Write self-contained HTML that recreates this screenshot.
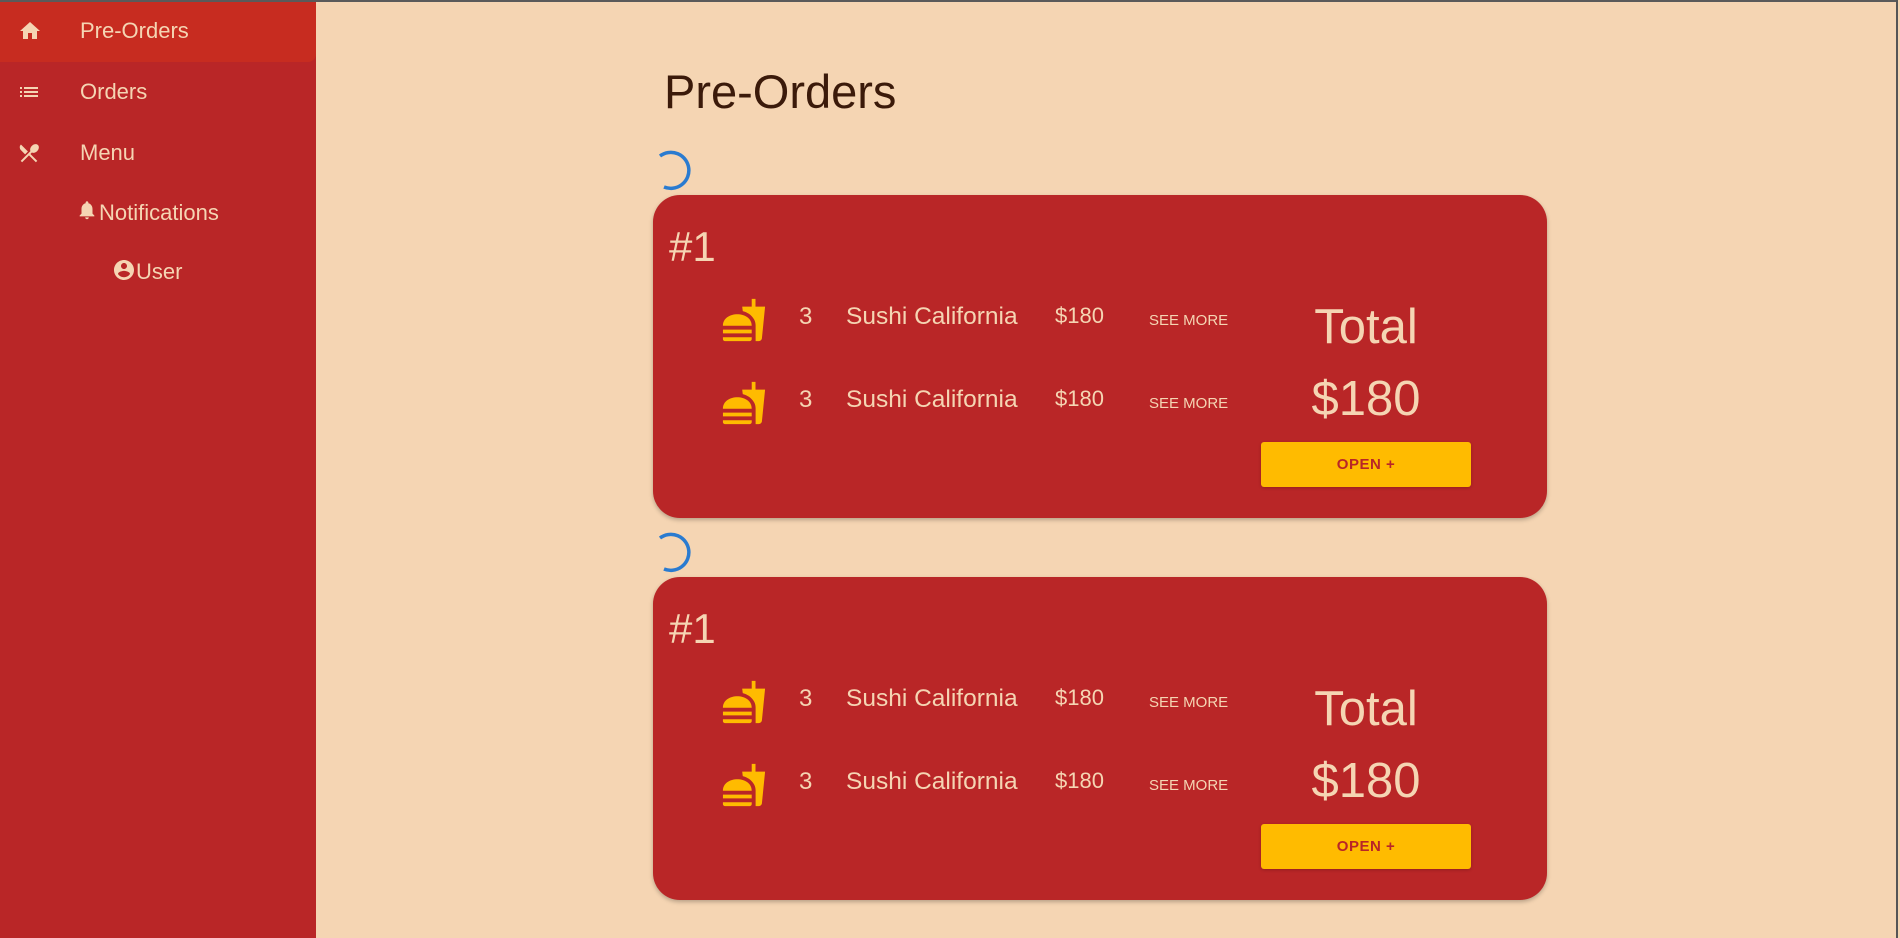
<!DOCTYPE html>
<html><head><meta charset="utf-8"><style>
*{margin:0;padding:0;box-sizing:border-box}
body{width:1900px;height:938px;overflow:hidden;background:#f5d5b3;font-family:"Liberation Sans",sans-serif;position:relative}
.top{position:absolute;left:0;top:0;width:1900px;height:2px;background:#5a5a5a}
.side{position:absolute;left:0;top:2px;width:316px;height:936px;background:#b92627}
.active{position:absolute;left:0;top:0;width:316px;height:60px;background:#c72c20;border-bottom-right-radius:8px}
.nav{position:absolute;color:#f5d5b3;font-size:22px;line-height:26px}
h1{position:absolute;left:664px;top:64px;font-size:47px;font-weight:normal;color:#3b1a0a}
.spin{position:absolute;width:42px;height:42px}
.card{position:absolute;left:653px;width:894px;height:323px;background:#b92627;border-radius:27px;box-shadow:0 2px 4px rgba(0,0,0,.25);color:#f5d5b3}
.num{position:absolute;left:16px;top:28px;font-size:42px}
.row{position:absolute;left:0;width:100%;height:50px}
.row svg{position:absolute;left:68px;top:0}
.q{position:absolute;left:146px;top:6px;font-size:24px}
.n{position:absolute;left:193px;top:6px;font-size:24.5px}
.p{position:absolute;left:402px;top:6px;font-size:22px}
.s{position:absolute;left:496px;top:15px;font-size:15px}
.tot{position:absolute;left:613px;width:200px;text-align:center;font-size:49px}
.btn{position:absolute;left:608px;top:247px;width:210px;height:45px;background:#ffbb00;border-radius:3px;color:#b92627;font-weight:bold;font-size:15px;text-align:center;line-height:45px;box-shadow:0 1px 3px rgba(0,0,0,.2);letter-spacing:.5px}
</style></head><body>
<div class="top"></div>
<div style="position:absolute;right:0;top:0;width:4px;height:938px;background:#f5d5b3;border-left:2px solid #555"></div>
<div class="side">
<div class="active"></div>
<div class="nav" style="left:80px;top:16px">Pre-Orders</div>
<svg style="position:absolute;left:18px;top:17px" width="24" height="24" viewBox="0 0 24 24"><path fill="#f5d5b3" d="M10 20v-6h4v6h5v-8h3L12 3 2 12h3v8z"/></svg>
<div class="nav" style="left:80px;top:77px">Orders</div>
<svg style="position:absolute;left:17px;top:78px" width="24" height="24" viewBox="0 0 24 24"><path fill="#f5d5b3" d="M3 13h2v-2H3v2zm0 4h2v-2H3v2zm0-8h2V7H3v2zm4 4h14v-2H7v2zm0 4h14v-2H7v2zM7 7v2h14V7H7z"/></svg>
<div class="nav" style="left:80px;top:138px">Menu</div>
<svg style="position:absolute;left:17px;top:139px" width="24" height="24" viewBox="0 0 24 24"><path fill="#f5d5b3" d="M8.1 13.34l2.83-2.83L3.91 3.5a4.008 4.008 0 000 5.66l4.19 4.18zm6.78-1.81c1.53.71 3.680.21 5.27-1.38 1.91-1.91 2.28-4.65.81-6.12-1.46-1.46-4.2-1.1-6.12.81-1.59 1.59-2.09 3.740-1.38 5.27L3.7 19.87l1.41 1.41L12 14.41l6.88 6.88 1.41-1.41L13.41 13l1.47-1.47z"/></svg>
<div class="nav" style="left:99px;top:198px">Notifications</div>
<svg style="position:absolute;left:76px;top:197px" width="22" height="22" viewBox="0 0 24 24"><path fill="#f5d5b3" d="M12 22c1.1 0 2-.9 2-2h-4c0 1.1.89 2 2 2zm6-6v-5c0-3.07-1.64-5.64-4.5-6.32V4c0-.83-.67-1.5-1.5-1.5s-1.5.67-1.5 1.5v.68C7.63 5.36 6 7.92 6 11v5l-2 2v1h16v-1l-2-2z"/></svg>
<div class="nav" style="left:136px;top:257px">User</div>
<svg style="position:absolute;left:112px;top:256px" width="24" height="24" viewBox="0 0 24 24"><path fill="#f5d5b3" d="M12 2C6.48 2 2 6.48 2 12s4.48 10 10 10 10-4.48 10-10S17.52 2 12 2zm0 3c1.66 0 3 1.34 3 3s-1.34 3-3 3-3-1.34-3-3 1.34-3 3-3zm0 14.2c-2.5 0-4.71-1.28-6-3.22.03-1.99 4-3.08 6-3.08 1.99 0 5.97 1.09 6 3.08-1.29 1.94-3.5 3.22-6 3.22z"/></svg>
</div>
<h1>Pre-Orders</h1>

<svg class="spin" style="left:652px;top:150px" viewBox="0 0 42 42"><path d="M8 6 A18 18 0 1 1 12 37" fill="none" stroke="#2a7bd0" stroke-width="3.5"/></svg>
<svg class="spin" style="left:652px;top:532px" viewBox="0 0 42 42"><path d="M8 6 A18 18 0 1 1 12 37" fill="none" stroke="#2a7bd0" stroke-width="3.5"/></svg>

<div class="card" style="top:195px">
<div class="num">#1</div>
<div class="row" style="top:102px"><svg width="46" height="46" viewBox="0 0 24 24"><path fill="#ffbb00" d="M18.06 22.99h1.66c.84 0 1.53-.64 1.63-1.46L23 5.05h-5V1h-1.97v4.05h-4.97l.3 2.34c1.71.47 3.31 1.32 4.27 2.26 1.44 1.42 2.43 2.89 2.43 5.29v8.05zM1 21.99V21h15.03v.99c0 .55-.45 1-1.01 1H2.01c-.56 0-1.01-.45-1.01-1zm15.03-7c0-8-15.03-8-15.03 0h15.03zM1.02 17h15v2h-15z"/></svg><div class="q">3</div><div class="n">Sushi California</div><div class="p">$180</div><div class="s">SEE MORE</div></div>
<div class="row" style="top:185px"><svg width="46" height="46" viewBox="0 0 24 24"><path fill="#ffbb00" d="M18.06 22.99h1.66c.84 0 1.53-.64 1.63-1.46L23 5.05h-5V1h-1.97v4.05h-4.97l.3 2.34c1.71.47 3.31 1.32 4.27 2.26 1.44 1.42 2.43 2.89 2.43 5.29v8.05zM1 21.99V21h15.03v.99c0 .55-.45 1-1.01 1H2.01c-.56 0-1.01-.45-1.01-1zm15.03-7c0-8-15.03-8-15.03 0h15.03zM1.02 17h15v2h-15z"/></svg><div class="q">3</div><div class="n">Sushi California</div><div class="p">$180</div><div class="s">SEE MORE</div></div>
<div class="tot" style="top:104px">Total</div>
<div class="tot" style="top:176px">$180</div>
<div class="btn">OPEN +</div>
</div>

<div class="card" style="top:577px">
<div class="num">#1</div>
<div class="row" style="top:102px"><svg width="46" height="46" viewBox="0 0 24 24"><path fill="#ffbb00" d="M18.06 22.99h1.66c.84 0 1.53-.64 1.63-1.46L23 5.05h-5V1h-1.97v4.05h-4.97l.3 2.34c1.71.47 3.31 1.32 4.27 2.26 1.44 1.42 2.43 2.89 2.43 5.29v8.05zM1 21.99V21h15.03v.99c0 .55-.45 1-1.01 1H2.01c-.56 0-1.01-.45-1.01-1zm15.03-7c0-8-15.03-8-15.03 0h15.03zM1.02 17h15v2h-15z"/></svg><div class="q">3</div><div class="n">Sushi California</div><div class="p">$180</div><div class="s">SEE MORE</div></div>
<div class="row" style="top:185px"><svg width="46" height="46" viewBox="0 0 24 24"><path fill="#ffbb00" d="M18.06 22.99h1.66c.84 0 1.53-.64 1.63-1.46L23 5.05h-5V1h-1.97v4.05h-4.97l.3 2.34c1.71.47 3.31 1.32 4.27 2.26 1.44 1.42 2.43 2.89 2.43 5.29v8.05zM1 21.99V21h15.03v.99c0 .55-.45 1-1.01 1H2.01c-.56 0-1.01-.45-1.01-1zm15.03-7c0-8-15.03-8-15.03 0h15.03zM1.02 17h15v2h-15z"/></svg><div class="q">3</div><div class="n">Sushi California</div><div class="p">$180</div><div class="s">SEE MORE</div></div>
<div class="tot" style="top:104px">Total</div>
<div class="tot" style="top:176px">$180</div>
<div class="btn">OPEN +</div>
</div>
</body></html>
